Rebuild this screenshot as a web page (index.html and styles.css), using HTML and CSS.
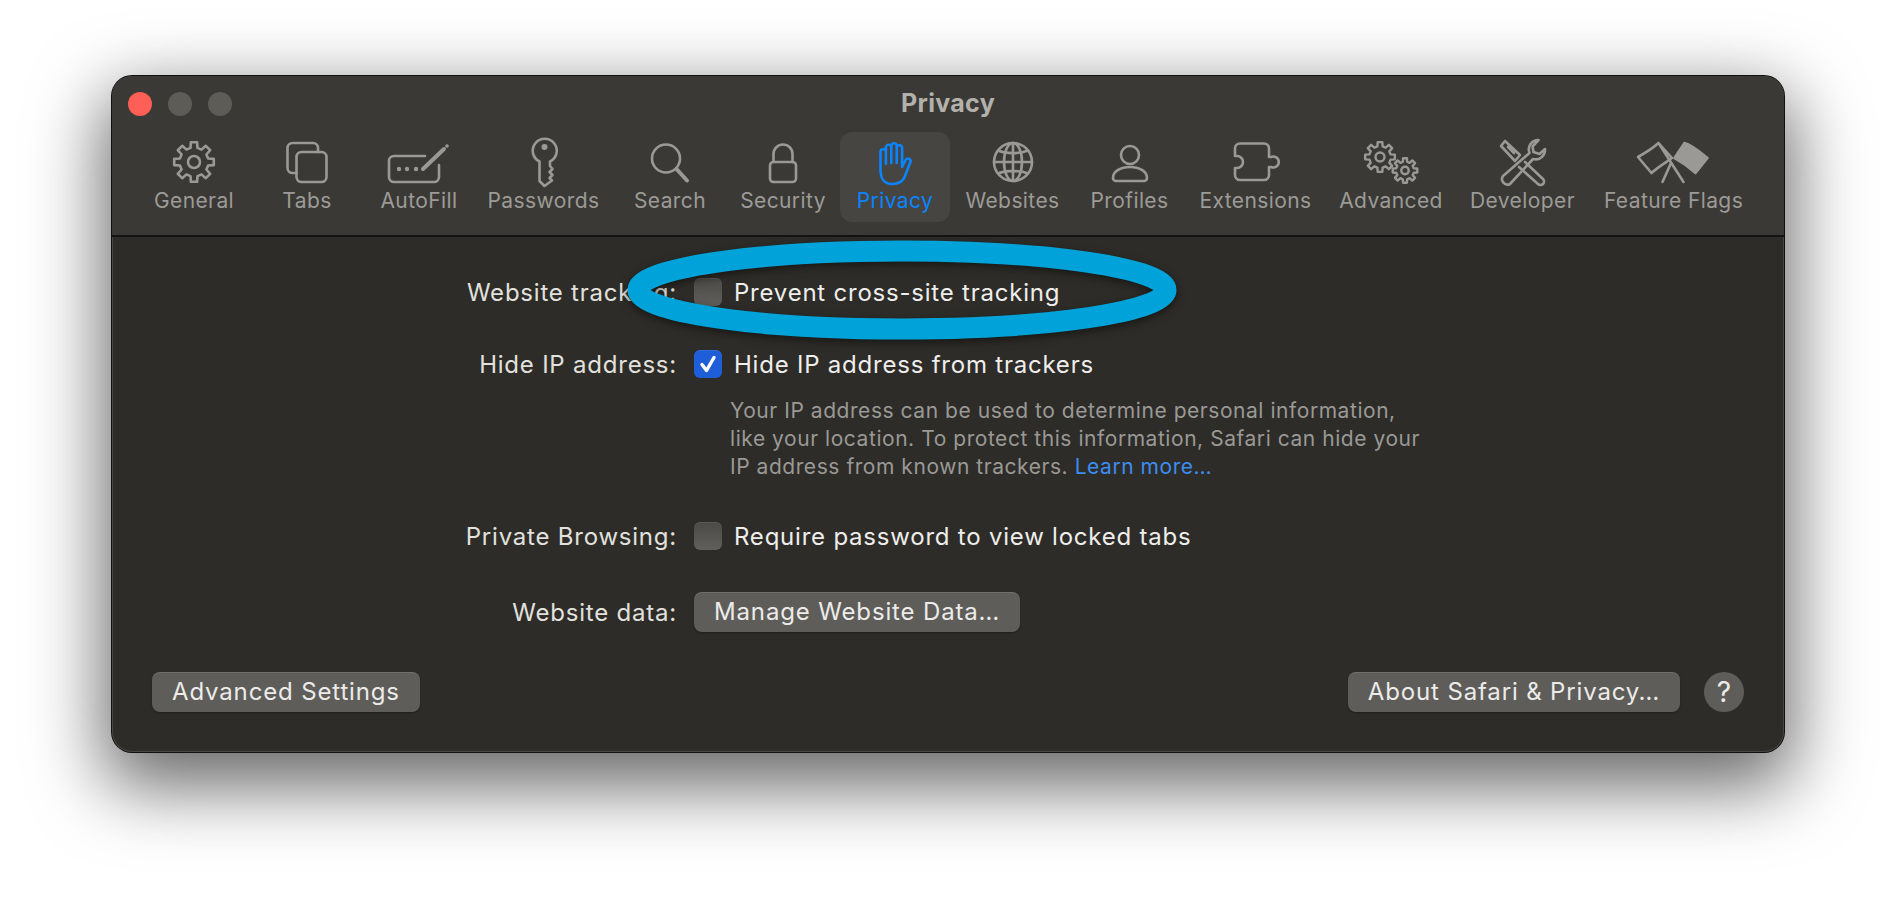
FILE: index.html
```html
<!DOCTYPE html>
<html lang="en">
<head>
    <meta charset="UTF-8">
    <title>Privacy</title>
    <link rel="stylesheet" href="styles.css">
</head>
<body>
    <div class="window">
        <header class="toolbar">
            <div class="lights">
                <span class="light red"></span>
                <span class="light"></span>
                <span class="light"></span>
            </div>
            <h1 class="title">Privacy</h1>
            <nav class="tabs">
                <div class="tab">
                    <svg class="icon" width="50" height="50" viewBox="0 0 50 50">
                        <defs>
                            <g id="gear">
                                <path d="M-3.5-14.1L-3.1-19.8 3.1-19.8 3.5-14.1 7.5-12.4 11.8-16.2 16.2-11.8 12.4-7.5 14.1-3.5 19.8-3.1 19.8 3.1 14.1 3.5 12.4 7.5 16.2 11.8 11.8 16.2 7.5 12.4 3.5 14.1 3.1 19.8-3.1 19.8-3.5 14.1-7.5 12.4-11.8 16.2-16.2 11.8-12.4 7.5-14.1 3.5-19.8 3.1-19.8-3.1-14.1-3.5-12.4-7.5-16.2-11.8-11.8-16.2-7.5-12.4Z"/>
                                <circle r="6"/>
                            </g>
                        </defs>
                        <use href="#gear" x="25" y="24"/>
                    </svg>
                    <span>General</span>
                </div>
                <div class="tab">
                    <svg class="icon" width="50" height="50" viewBox="0 0 50 50">
                        <path d="M14.5 35h-4a5 5 0 0 1-5-5V10a5 5 0 0 1 5-5H31a5 5 0 0 1 5 5v4"/>
                        <rect x="14.5" y="14" width="30" height="30" rx="5"/>
                    </svg>
                    <span>Tabs</span>
                </div>
                <div class="tab">
                    <svg class="icon" width="70" height="50" viewBox="0 0 70 50">
                        <path d="M41 18H10a5 5 0 0 0-5 5V39a5 5 0 0 0 5 5H50a5 5 0 0 0 5-5V27"/>
                        <path class="thick" d="M39 31L60 11"/>
                        <circle class="solid" cx="63" cy="8" r="1.8"/>
                        <circle class="solid" cx="15" cy="31" r="2.2"/>
                        <circle class="solid" cx="23" cy="31" r="2.2"/>
                        <circle class="solid" cx="32" cy="31" r="2.2"/>
                    </svg>
                    <span>AutoFill</span>
                </div>
                <div class="tab">
                    <svg class="icon" width="40" height="50" viewBox="0 0 40 50">
                        <path d="M15.5 23.5A12 12 0 1 1 26 23.5V28l2.5 3-3 3 3 3-3 3 2.500 2.500L20.500 48 15.500 43Z"/>
                        <circle class="solid" cx="20.5" cy="9" r="3"/>
                    </svg>
                    <span>Passwords</span>
                </div>
                <div class="tab">
                    <svg class="icon" width="50" height="50" viewBox="0 0 50 50">
                        <circle cx="21" cy="20.5" r="14"/>
                        <path class="thick" d="M31.5 31L42 42.5"/>
                    </svg>
                    <span>Search</span>
                </div>
                <div class="tab">
                    <svg class="icon" width="50" height="50" viewBox="0 0 50 50">
                        <rect x="12" y="24" width="26" height="20" rx="3.5"/>
                        <path d="M15.5 24V16a9.5 9.5 0 0 1 19 0V24"/>
                    </svg>
                    <span>Security</span>
                </div>
                <div class="tab active">
                    <svg class="icon" width="50" height="50" viewBox="0 0 50 50">
                        <path d="M10.5 32V14a2.7 2.7 0 0 1 5.4 0V26M15.9 14V9.5a2.7 2.7 0 0 1 5.4 0V25M21.3 9.5V8a2.7 2.7 0 0 1 5.4 0V25M26.7 10a2.7 2.7 0 0 1 5.4 0V29l3.5-7a2.6 2.6 0 0 1 4.6 2.5L35 38C33 44 27 46 22 46 15 46 10.5 41 10.5 32"/>
                    </svg>
                    <span>Privacy</span>
                </div>
                <div class="tab">
                    <svg class="icon" width="50" height="50" viewBox="0 0 50 50">
                        <circle cx="25" cy="24" r="19"/>
                        <ellipse cx="25" cy="24" rx="9" ry="19"/>
                        <path d="M25 5V43M6 24H44M10 12.5C18 16 32 16 40 12.5M10 35.5C18 32 32 32 40 35.5"/>
                    </svg>
                    <span>Websites</span>
                </div>
                <div class="tab">
                    <svg class="icon" width="50" height="50" viewBox="0 0 50 50">
                        <circle cx="25" cy="17" r="9"/>
                        <path d="M11 43H39a3 3 0 0 0 3-3C42 33 34 29 25 29S8 33 8 40a3 3 0 0 0 3 3Z"/>
                    </svg>
                    <span>Profiles</span>
                </div>
                <div class="tab">
                    <svg class="icon" width="50" height="50" viewBox="0 0 50 50">
                        <path d="M9 5.5H33a5 5 0 0 1 5 5V19h2a5.500 5.500 0 1 1 0 10h-2v8a5 5 0 0 1-5 5H9a5 5 0 0 1-5-5V30H6a6 6 0 1 0 0-12H4V10.5a5 5 0 0 1 5-5Z"/>
                    </svg>
                    <span>Extensions</span>
                </div>
                <div class="tab">
                    <svg class="icon" width="60" height="50" viewBox="0 0 60 50">
                        <g transform="translate(19 19) scale(.75)" stroke-width="3.2"><use href="#gear"/></g>
                        <g transform="translate(44 32.5) scale(.62)" stroke-width="3.9"><use href="#gear"/></g>
                    </svg>
                    <span>Advanced</span>
                </div>
                <div class="tab">
                    <svg class="icon" width="50" height="50" viewBox="0 0 50 50">
                        <path d="M7 3L22 17 17 23 3 8ZM10 9L16 15"/>
                        <path d="M27 24L45 41a3.5 3.5 0 0 1-5 5L21 29"/>
                        <path d="M40.5 2a9.5 9.5 0 0 0-9 13L5 38a5.5 5.5 0 0 0 7 8L35 21a9.5 9.5 0 0 0 12-10l-5.500 5-6-2-1-5.500Z"/>
                    </svg>
                    <span>Developer</span>
                </div>
                <div class="tab">
                    <svg class="icon" width="80" height="50" viewBox="0 0 80 50">
                        <path d="M4 19C11 15 18 11 24.500 5L38 20C31 25 24 29 17.500 35ZM24.500 5L49.500 44M37 25L28.500 44"/>
                        <path class="filled" d="M40.500 20L50.500 5C58 7 66 14 73.500 20L61.500 35C55 29 48 24 40.500 20Z"/>
                    </svg>
                    <span>Feature Flags</span>
                </div>
            </nav>
        </header>

        <main class="content">
            <div class="settings">
                <div class="setting row-track">
                    <div class="setting-label">Website tracking:</div>
                    <label class="check"><span class="box"></span>Prevent cross-site tracking</label>
                </div>
                <div class="setting row-ip">
                    <div class="setting-label">Hide IP address:</div>
                    <div>
                        <label class="check"><span class="box on"><svg width="28" height="28" viewBox="0 0 28 28"><path d="M8 14.500L12.500 20.500 20 7.500"/></svg></span>Hide IP address from trackers</label>
                        <p class="hint">Your IP address can be used to determine personal information,<br>like your location. To protect this information, Safari can hide your<br>IP address from known trackers. <a class="link">Learn more…</a></p>
                    </div>
                </div>
                <div class="setting row-private">
                    <div class="setting-label">Private Browsing:</div>
                    <label class="check"><span class="box"></span>Require password to view locked tabs</label>
                </div>
                <div class="setting row-data">
                    <div class="setting-label">Website data:</div>
                    <button class="btn">Manage Website Data…</button>
                </div>
            </div>
            <div class="footer">
                <button class="btn">Advanced Settings</button>
                <div class="footer-right">
                    <button class="btn">About Safari &amp; Privacy…</button>
                    <button class="help">?</button>
                </div>
            </div>
        </main>

        <!-- blue annotation drawn over the first row -->
        <svg class="ring" width="580" height="120" viewBox="0 0 580 120">
            <ellipse cx="290" cy="60" rx="264" ry="39"/>
        </svg>
    </div>
</body>
</html>
```

FILE: styles.css
```css
* {
    margin: 0;
    padding: 0;
    box-sizing: border-box;
}

body {
    width: 1896px;
    height: 900px;
    overflow: hidden;
    background-color: #fff;
    padding: 76px 0 0 112px;
    font-family: Inter, "Liberation Sans", sans-serif;
    -webkit-font-smoothing: antialiased;
}

.window {
    position: relative;
    width: 1672px;
    height: 676px;
    border-radius: 20px;
    background-color: #2d2c28;
    box-shadow: 0 0 0 1px #111, inset 0 0 0 1px rgba(255, 255, 255, 0.13), 0 26px 72px 8px rgba(0, 0, 0, 0.6);
}

.toolbar {
    height: 161px;
    background-color: #3a3935;
    border-radius: 20px 20px 0 0;
    border-bottom: 2px solid #141412;
    position: relative;
}

.lights {
    position: absolute;
    left: 16px;
    top: 16px;
    display: flex;
    gap: 16px;
}

.light {
    width: 24px;
    height: 24px;
    border-radius: 50%;
    background-color: #5d5c57;
}

.light.red {
    background-color: #ff5f57;
}

.title {
    padding-top: 12px;
    height: 56px;
    text-align: center;
    font-size: 25px;
    line-height: 30px;
    letter-spacing: 0.3px;
    font-weight: 700;
    color: #b3b1ac;
}

.tabs {
    display: grid;
    grid-template-columns: 110px 116px 108px 141px 112px 114px 110px 125px 109px 143px 128px 135px 167px;
    padding-left: 27px;
}

.tab {
    height: 90px;
    padding-top: 6px;
    border-radius: 12px;
    display: flex;
    flex-direction: column;
    align-items: center;
    font-size: 21px;
    line-height: 24px;
    letter-spacing: 0.4px;
    color: #9c9b97;
    white-space: nowrap;
}

.tab.active {
    background-color: #464541;
    color: #0a84ff;
}

.icon {
    display: block;
    overflow: visible;
    margin-bottom: 1px;
    fill: none;
    stroke: #9a9996;
    stroke-width: 2.6;
    stroke-linejoin: round;
    stroke-linecap: round;
}

.active .icon {
    stroke: #0a84ff;
}

.icon .thick {
    stroke-width: 4;
}

.icon .solid, .icon .filled {
    fill: #9a9996;
    stroke: none;
}

.icon .filled {
    stroke: #9a9996;
}

.content {
    height: 513px;
    padding: 0 40px;
    position: relative;
}

.settings {
    padding-top: 41px;
}

.setting {
    display: flex;
    font-size: 24px;
    line-height: 28px;
    letter-spacing: 0.78px;
    color: #e2e1de;
}

.setting-label {
    width: 525px;
    margin-right: 17px;
    padding-top: 1px;
    text-align: right;
    white-space: nowrap;
    flex-shrink: 0;
}

.row-ip { margin-top: 43px; }
.row-private { margin-top: 40.4px; }
.row-data { margin-top: 41px; align-items: center; }

.check {
    display: flex;
    align-items: center;
    padding-top: 1px;
    color: #efeeec;
    white-space: nowrap;
}

.box {
    width: 28px;
    height: 28px;
    margin: -2px 12px 0 0;
    border-radius: 6px;
    background: linear-gradient(#4b4a47, #605f5b);
    box-shadow: inset 0 1px 0 rgba(255, 255, 255, 0.08);
}

.box.on {
    background: #1e5fd9;
}

.box svg {
    display: block;
    fill: none;
    stroke: #fff;
    stroke-width: 3.4;
    stroke-linecap: round;
    stroke-linejoin: round;
}

.hint {
    margin: 18px 0 0 36px;
    font-size: 21px;
    line-height: 28.2px;
    letter-spacing: 0.55px;
    color: #9a9996;
    white-space: nowrap;
}

.link {
    color: #3b8df0;
}

.btn {
    height: 40px;
    padding: 0 20px 2px;
    border: none;
    border-radius: 8px;
    background-color: #5e5d59;
    box-shadow: inset 0 1px 0 rgba(255, 255, 255, 0.12), 0 1px 2px rgba(0, 0, 0, 0.3);
    font-family: inherit;
    font-size: 24px;
    letter-spacing: 0.85px;
    color: #ecebe9;
    white-space: nowrap;
}

.footer {
    display: flex;
    justify-content: space-between;
    margin-top: 40px;
}

.footer-right {
    display: flex;
    gap: 24px;
}

.help {
    width: 40px;
    height: 40px;
    border: none;
    border-radius: 50%;
    background-color: #5e5d59;
    font-family: inherit;
    font-size: 28px;
    color: #ecebe9;
}

/* overlay, the annotation someone drew on the screenshot */
.ring {
    position: absolute;
    left: 500px;
    top: 154px;
    fill: none;
    stroke: #00a3d9;
    stroke-width: 21;
    filter: drop-shadow(0 3px 4px rgba(0, 0, 0, 0.5));
}
```
